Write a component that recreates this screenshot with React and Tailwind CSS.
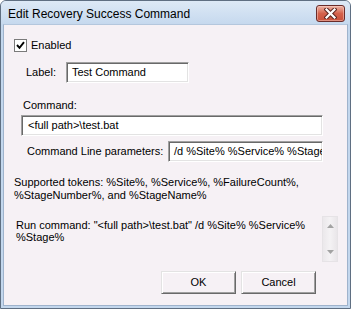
import React from "react";

function Input({ value, className }) {
  return (
    <div
      className={
        "h-[21px] bg-white border-t border-l border-t-[#a0a0a0] border-l-[#a0a0a0] border-b border-r border-b-white border-r-white shadow-[inset_1px_1px_0_#696969,inset_-1px_-1px_0_#e3e3e3] flex items-start pt-[3px] pl-[5px] overflow-hidden whitespace-nowrap " +
        className
      }
    >
      <span className="leading-[13px]">{value}</span>
    </div>
  );
}

function Button({ children }) {
  return (
    <div className="w-[75px] h-[23px] flex items-center justify-center border-t border-l border-t-[#e3e3e3] border-l-[#e3e3e3] border-b border-r border-b-[#696969] border-r-[#696969] shadow-[inset_1px_1px_0_#ffffff,inset_-1px_-1px_0_#a0a0a0] bg-[#f6f1f5] leading-[13px]">
      {children}
    </div>
  );
}

export default function App() {
  return (
    <div className="w-[351px] h-[309px] bg-white overflow-hidden font-['Liberation_Sans',Arial,sans-serif] text-[11px] text-black">
      <div className="w-full h-full rounded-t-[6px] border border-[#5f6f82] bg-[#c3d7ed] flex flex-col">
        {/* Title bar */}
        <div className="h-[23px] flex items-center pl-[7px] pr-[5px] bg-gradient-to-b from-[#dde9f6] to-[#c6d9ee] rounded-t-[5px]">
          <span className="font-['Liberation_Sans',Arial,sans-serif] text-[12px] text-black pt-[3px] leading-[15px]">
            Edit Recovery Success Command
          </span>
          <div className="ml-auto mt-[1px] w-[29px] h-[17px] rounded-[3px] border border-[#6a2c2a] bg-gradient-to-b from-[#ecb3a5] via-[#d4624c] to-[#c9513b] flex items-center justify-center shadow-[inset_0_0_0_1px_rgba(255,220,210,0.45)]">
            <svg width="13" height="11" viewBox="0 0 13 11">
              <path d="M2.5 1.5 L10.5 9.5 M10.5 1.5 L2.5 9.5" stroke="#5a2520" strokeWidth="4.2" strokeLinecap="square" />
              <path d="M2.5 1.5 L10.5 9.5 M10.5 1.5 L2.5 9.5" stroke="#ffffff" strokeWidth="2.2" strokeLinecap="square" />
            </svg>
          </div>
        </div>
        {/* Client */}
        <div className="flex-1 px-[2px] pb-[2px]">
          <div className="h-full border border-[#9fb3cc] border-t-[#b4c7dd] bg-[#f6f1f5] flex flex-col">
            {/* Enabled */}
            <div className="mt-[14px] ml-[10px] flex items-center h-[13px]">
              <div className="w-[13px] h-[13px] border border-[#7a7a7a] bg-gradient-to-br from-[#dcdcdc] to-white flex items-center justify-center">
                <div className="w-[11px] h-[11px] bg-white flex items-center justify-center">
                  <svg width="9" height="9" viewBox="0 0 9 9">
                    <path d="M1 4 L3.5 6.8 L8 1.2" fill="none" stroke="#000" strokeWidth="1.9" />
                  </svg>
                </div>
              </div>
              <span className="ml-[4px] leading-[13px]">Enabled</span>
            </div>
            {/* Label */}
            <div className="mt-[10px] ml-[22px] flex items-center">
              <span className="w-[40px] leading-[13px]">Label:</span>
              <Input value="Test Command" className="w-[123px]" />
            </div>
            {/* Command */}
            <div className="mt-[16px] ml-[19px] leading-[13px] h-[13px]">Command:</div>
            <div className="mt-[3px] ml-[17px]">
              <Input value={"<full path>\\test.bat"} className="w-[302px] pl-[6px]" />
            </div>
            {/* Params */}
            <div className="mt-[5px] ml-[23px] flex items-center">
              <span className="w-[141px] leading-[13px]">Command Line parameters:</span>
              <Input value="/d %Site% %Service% %StageNumber%" className="w-[155px]" />
            </div>
            {/* Tokens */}
            <div className="mt-[14px] ml-[10px] leading-[13px]">
              Supported tokens: %Site%, %Service%, %FailureCount%,
              <br />
              %StageNumber%, and %StageName%
            </div>
            {/* Run command */}
            <div className="mt-[14px] ml-[10px] mr-[9px] h-[46px] flex">
              <div className="flex-1 pl-[2px] pt-[3px] leading-[12px]">
                Run command: "&lt;full path&gt;\test.bat" /d %Site% %Service%
                <br />
                %Stage%
              </div>
              <div className="w-[16px] h-full border border-[#e6e3e6] bg-gradient-to-r from-[#ebe8eb] via-[#f4f2f4] to-[#e9e6e9] flex flex-col items-center justify-between py-[7px]">
                <svg width="7" height="4" viewBox="0 0 7 4">
                  <path d="M0 4 L3.5 0 L7 4 Z" fill="#a3a3a3" />
                </svg>
                <svg width="7" height="4" viewBox="0 0 7 4">
                  <path d="M0 0 L3.5 4 L7 0 Z" fill="#a3a3a3" />
                </svg>
              </div>
            </div>
            {/* Buttons */}
            <div className="mt-[9px] ml-[157px] flex gap-[5px]">
              <Button>OK</Button>
              <Button>Cancel</Button>
            </div>
          </div>
        </div>
      </div>
    </div>
  );
}
